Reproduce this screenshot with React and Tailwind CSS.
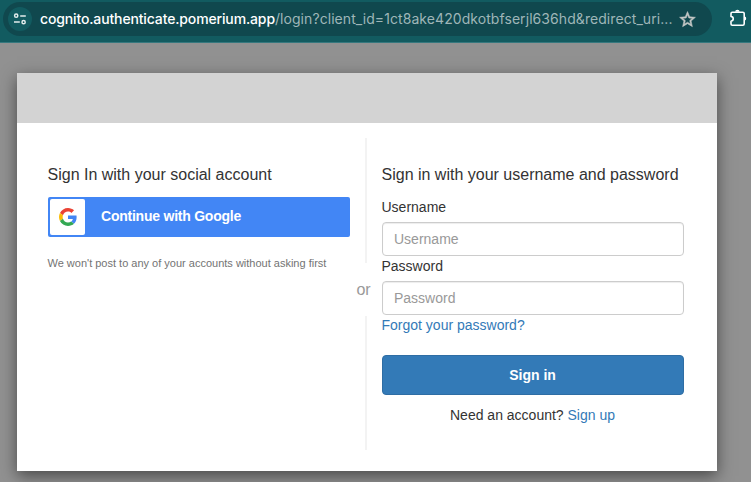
function TuneIcon() {
  return (
    <svg width="14" height="14" viewBox="0 0 14 14" fill="none" stroke="#e4eded" strokeWidth="1.5">
      <circle cx="3.2" cy="3.7" r="1.6" />
      <path d="M7.2 4H12.8" />
      <path d="M1 10H6.8" />
      <circle cx="10.6" cy="10.2" r="1.6" />
    </svg>
  );
}

function StarIcon() {
  return (
    <svg width="19" height="19" viewBox="0 0 24 24" fill="#c3c7c5" stroke="#c3c7c5" strokeWidth="0.7">
      <path d="M22 9.24l-7.19-.62L12 2 9.19 8.63 2 9.24l5.46 4.73L5.82 21 12 17.27 18.18 21l-1.63-7.03L22 9.24zM12 15.4l-3.76 2.27 1-4.28-3.32-2.88 4.38-.38L12 6.1l1.71 4.04 4.38.38-3.32 2.88 1 4.28L12 15.4z" />
    </svg>
  );
}

function ExtensionIcon() {
  return (
    <svg width="18" height="18" viewBox="0 0 18 18" fill="none" stroke="#ffffff" strokeWidth="1.6" strokeLinejoin="round">
      <path d="M3.2 3.2H13.8Q15.2 3.2 15.2 4.6V14.8Q15.2 16.2 13.8 16.2H3.2Q2 16.2 2 15V12.2C5 11.8 5 7.9 2 7.4V4.4Q2 3.2 3.2 3.2Z" />
      <path d="M6.2 2.8V2.6a2.2 1.8 0 0 1 4.4 0V2.8ZM15.6 7.4a1.6 2.1 0 0 1 0 4.2Z" fill="#ffffff" stroke="none" />
    </svg>
  );
}

function GoogleIcon() {
  return (
    <svg width="18" height="18" viewBox="0 0 48 48">
      <path fill="#EA4335" d="M24 9.5c3.54 0 6.71 1.22 9.21 3.6l6.85-6.85C35.9 2.38 30.47 0 24 0 14.62 0 6.51 5.38 2.56 13.22l7.98 6.19C12.43 13.72 17.74 9.5 24 9.5z" />
      <path fill="#4285F4" d="M46.98 24.55c0-1.57-.15-3.09-.38-4.55H24v9.02h12.94c-.58 2.96-2.26 5.48-4.78 7.18l7.73 6c4.51-4.18 7.09-10.36 7.09-17.65z" />
      <path fill="#FBBC05" d="M10.53 28.59c-.48-1.45-.76-2.99-.76-4.59s.27-3.14.76-4.59l-7.98-6.19C.92 16.46 0 20.12 0 24s.92 7.54 2.56 10.78l7.97-6.19z" />
      <path fill="#34A853" d="M24 48c6.48 0 11.93-2.13 15.89-5.81l-7.73-6c-2.15 1.45-4.92 2.3-8.16 2.3-6.26 0-11.57-4.22-13.47-9.91l-7.98 6.19C6.51 42.62 14.62 48 24 48z" />
    </svg>
  );
}

function AddressBar() {
  return (
    <div className="flex h-[43px] items-start border-b border-[#35787e] bg-[#125b60] pt-0.5">
      <div className="flex h-[34px] w-[709px] shrink-0 items-center rounded-full bg-[#10484e] ml-[3px] pl-[5px]">
        <div className="flex size-6 shrink-0 items-center justify-center rounded-full bg-[#125b60]">
          <TuneIcon />
        </div>
        <div className="ml-2 w-[638px] shrink-0 whitespace-nowrap font-['Inter',sans-serif] text-[14px] leading-5 text-[#9fb6b8]">
          <span className="font-medium tracking-[-0.14px] text-white">cognito.authenticate.pomerium.app</span>
          <span className="tracking-[0.07px]">/login?client_id=1ct8ake420dkotbfserjl636hd&amp;redirect_uri...</span>
        </div>
        <div className="shrink-0"><StarIcon /></div>
      </div>
      <div className="ml-[17px] mt-[7px] shrink-0"><ExtensionIcon /></div>
    </div>
  );
}

function Field({ label, type }) {
  return (
    <label className="block">
      <span className="-ml-[0.5px] block h-[25px] leading-5">{label}</span>
      <input
        type={type}
        placeholder={label}
        className="block h-[34px] w-full rounded border border-[#cccccc] bg-white px-[11px] text-[14px] shadow-[inset_0_1px_1px_rgba(0,0,0,0.075)] placeholder:text-[#999999]"
      />
    </label>
  );
}

export default function App() {
  return (
    <div className="h-[482px] w-[751px] overflow-hidden bg-[#919191] font-['Liberation_Sans',Arial,sans-serif] text-[14px] text-[#333333]">
      <AddressBar />
      <main className="ml-[17px] mt-[30px] h-[398px] w-[700px] bg-white shadow-[0_5px_15px_rgba(0,0,0,0.5)]">
        <div className="h-[50px] bg-[#d3d3d3]" />
        <div className="flex pl-[31px] pt-[15px]">
          <section className="w-[302px] pt-[25px]">
            <h1 className="-ml-[0.5px] h-[34px] whitespace-nowrap text-[16px] leading-[23px]">Sign In with your social account</h1>
            <button className="flex h-10 w-full items-center rounded-xs bg-[#4286f5] pl-0.5 font-bold text-white">
              <span className="flex h-9 w-[35px] items-center justify-center rounded-xs bg-white"><GoogleIcon /></span>
              <span className="ml-4 pb-0.5 leading-5 tracking-[-0.23px]">Continue with Google</span>
            </button>
            <p className="-ml-[0.5px] mt-[18px] whitespace-nowrap text-[11px] leading-4 text-[#737373]">We won't post to any of your accounts without asking first</p>
          </section>
          <div className="flex w-8 flex-col items-center">
            <div className="h-[125px] w-0.5 bg-[#f3f3f3]" />
            <div className="flex h-[53px] items-center pr-[5px] text-[16px] text-[#999999]">or</div>
            <div className="h-[134px] w-0.5 bg-[#f3f3f3]" />
          </div>
          <section className="w-[302px] pt-[25px]">
            <h1 className="-ml-[0.5px] h-[34px] whitespace-nowrap text-[16px] leading-[23px]">Sign in with your username and password</h1>
            <Field label="Username" type="text" />
            <Field label="Password" type="password" />
            <a className="-ml-[0.5px] block leading-5 text-[#337ab7]">Forgot your password?</a>
            <button className="mt-5 h-10 w-full rounded border border-[#2e6da4] bg-[#337ab7] pr-px font-bold text-white">Sign in</button>
            <p className="mt-2.5 pr-px text-center leading-5">Need an account? <a className="text-[#337ab7]">Sign up</a></p>
          </section>
        </div>
      </main>
    </div>
  );
}
